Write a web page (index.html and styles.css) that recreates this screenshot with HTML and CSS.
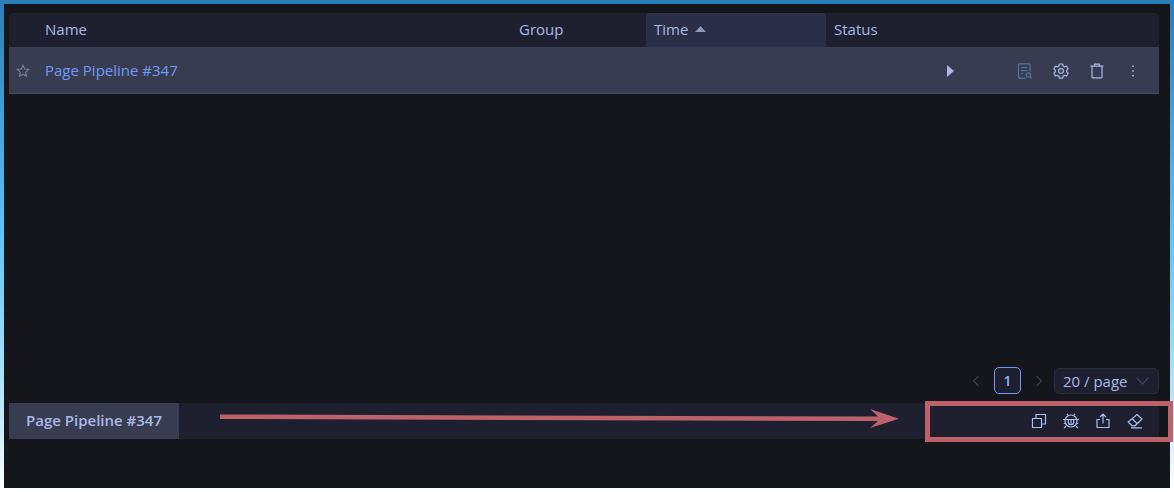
FILE: index.html
```html
<!DOCTYPE html>
<html lang="en">
<head>
<meta charset="utf-8">
<title>Page Pipeline</title>
<link rel="stylesheet" href="styles.css">
</head>
<body>
<div class="frame">
  <section class="table">
    <div class="cols head">
      <div class="cell"></div>
      <div class="cell">Name</div>
      <div class="cell">Group</div>
      <div class="cell sorted">Time <svg class="caret" viewBox="0 0 11 6"><path d="M5.5 0 11 6H0z"/></svg></div>
      <div class="cell">Status</div>
      <div class="cell"></div>
    </div>
    <div class="cols row">
      <div class="cell star">
        <svg class="i13" viewBox="0 0 14 14"><path d="M7 1.300 8.700 5l4 .5-3 2.700.8 4L7 10.200l-3.500 2 .8-4-3-2.700 4-.5z"/></svg>
      </div>
      <div class="cell link">Page Pipeline #347</div>
      <div class="cell"></div>
      <div class="cell"></div>
      <div class="cell"></div>
      <div class="cell actions">
        <svg class="play" viewBox="0 0 7 12"><path d="M0 0 7 6 0 12z"/></svg>
        <span class="spacer"></span>
        <svg class="act doc" viewBox="0 0 16 16"><path d="M13 8.500V1.500a.7.7 0 0 0-.7-.7H2.200a.7.7 0 0 0-.7.7v13a.7.7 0 0 0 .7.7H8.500M4 4.500h6.500M4 7.500h6.500M4 10.500h2"/><circle cx="11.300" cy="12" r="2.200"/><path d="m13 13.700 1.800 1.800"/></svg>
        <svg class="act" viewBox="0 0 16 16"><path d="M6.400 1h3.200l.5 2 1.400.8 2-.6 1.600 2.800-1.500 1.400v1.400l1.500 1.400-1.600 2.800-2-.6-1.400.8-.5 2H6.400l-.5-2-1.400-.8-2 .6L.9 10.200l1.500-1.400V7.400L.9 6l1.600-2.800 2 .6 1.400-.8z"/><circle cx="8" cy="8.100" r="2.400"/></svg>
        <svg class="act" viewBox="0 0 16 16"><path d="M1.500 3.200h13M5.500 3V1.200h5V3M3 3.200V14a.9.9 0 0 0 .9.9h8.200a.9.9 0 0 0 .9-.9V3.200"/></svg>
        <svg class="act" viewBox="0 0 16 16"><path class="dots" d="M8 2.500v1.400M8 7.300v1.400M8 12.100v1.400"/></svg>
      </div>
    </div>
  </section>

  <nav class="pager">
    <svg class="chev" viewBox="0 0 8 12"><path d="M6.500 1 1.500 6l5 5"/></svg>
    <span class="page">1</span>
    <svg class="chev" viewBox="0 0 8 12"><path d="M1.500 1l5 5-5 5"/></svg>
    <span class="size">20 / page <svg class="down" viewBox="0 0 12 7"><path d="M.7.7 6 6.300 11.300.7"/></svg></span>
  </nav>

  <footer class="bar">
    <span class="tab">Page Pipeline #347</span>
    <span class="tools">
      <svg class="tool" viewBox="0 0 16 16"><path d="M1.500 5.500h9v9h-9zM5 5.500V1.500h9.500V11H10.500"/></svg>
      <svg class="tool" viewBox="0 0 16 16"><circle cx="8" cy="8" r="6"/><path d="M0 6.500h16M.8 10.500h2M13.200 10.500h2M5.300 6.500v2.500a2.700 2.700 0 0 0 5.400 0V6.500M8 6.500v4M4 .8l1.300 1.700M12 .8l-1.300 1.700M1 15l2-1.800M15 15l-2-1.800"/></svg>
      <svg class="tool" viewBox="0 0 16 16"><path d="M5 6.500H2v8h12v-8h-3M8 10.500V1.200M5 4l3-3 3 3"/></svg>
      <svg class="tool" viewBox="0 0 16 16"><path d="M10 1.500 15 6l-7 6.800H5.200L1.200 9zM5 5.500l5 5M4 14.800h11"/></svg>
    </span>
  </footer>

  <div class="callout"></div>
  <svg class="arrow" viewBox="0 0 690 24"><path d="M4 9.500 662 11.500 654 4 683 13.700 654 23 662 16 4 14z"/></svg>
</div>
</body>
</html>
```

FILE: styles.css
```css
* { box-sizing: border-box; }
html, body { margin: 0; height: 100%; background: #fff; }
body { font-family: "Open Sans", "Noto Sans", sans-serif; font-size: 15px; color: #a9b8e8; overflow: hidden; }
.frame {
  position: relative;
  display: flex;
  flex-direction: column;
  width: 1174px;
  height: 492px;
  padding: 9px 11px 49px 5px;
  background: #15161b;
  border: 4px solid;
  border-image: linear-gradient(#2a7fb8 0, #58c5f5 47%, #c5e8f8 85%, #fff 100%) 1;
}
.table { display: flex; flex-direction: column; }
.cols { display: grid; grid-template-columns: 28px 474px 135px 180px 112px 221px; }
.head { height: 35px; background: #1e2030; border-radius: 4px 4px 0 0; border-bottom: 1px solid #3b3e52; }
.row { height: 46px; background: #383c50; border-bottom: 1px solid #4a4e66; }
.cell { display: flex; align-items: center; padding: 0 8px; min-width: 0; white-space: nowrap; }
.head .cell { padding-bottom: 3px; }
.sorted { background: #2a2e46; gap: 7px; }
.caret { width: 11px; height: 6px; fill: #8e98bd; }
.star { justify-content: center; padding: 0; }
.i13 { width: 14px; height: 14px; fill: none; stroke: #7c7f98; stroke-width: 1.100; }
.link { color: #6f9bf5; padding-bottom: 2px; }
.actions { padding: 0 18px 0 9px; gap: 20px; }
.play { width: 7px; height: 12px; fill: #a9b8e8; }
.spacer { flex: 1; }
.act { width: 16px; height: 16px; fill: none; stroke: #a9b8e8; stroke-width: 1.200; }
.doc { stroke: #4e75aa; }
.dots { stroke-width: 1.600; }
.pager { display: flex; align-items: center; justify-content: flex-end; margin-top: 273px; height: 27px; }
.chev { width: 8px; height: 12px; fill: none; stroke: #3c3e4c; stroke-width: 1.200; }
.page { display: flex; align-items: center; justify-content: center; width: 27px; height: 27px; margin: 0 14px 0 14px; border: 1px solid #6f9bf5; border-radius: 5px; background: #1e2030; color: #8fb0f5; font-size: 14px; font-weight: 600; }
.size { display: flex; align-items: center; justify-content: space-between; width: 105px; height: 26px; margin-left: 11px; padding: 0 9px 0 8px; border-radius: 5px; background: #1e2030; border: 1px solid #2a2d3f; font-size: 15px; }
.down { width: 13px; height: 8px; fill: none; stroke: #474c66; stroke-width: 1; }
.bar { display: flex; justify-content: space-between; align-items: center; height: 36px; margin-top: 9px; background: #1e2030; }
.tab { display: flex; align-items: center; height: 100%; padding: 0 17px 2px; width: 170px; background: #383c50; font-weight: 600; white-space: nowrap; }
.tools { display: flex; gap: 16px; padding-right: 16px; }
.tool { width: 16px; height: 16px; fill: none; stroke: #a9c0ee; stroke-width: 1.200; }
.callout { position: absolute; left: 921px; top: 397px; width: 248px; height: 41px; border: 5px solid #bd626b; }
.arrow { position: absolute; left: 212px; top: 401px; width: 690px; height: 24px; fill: #bd626b; }
```
